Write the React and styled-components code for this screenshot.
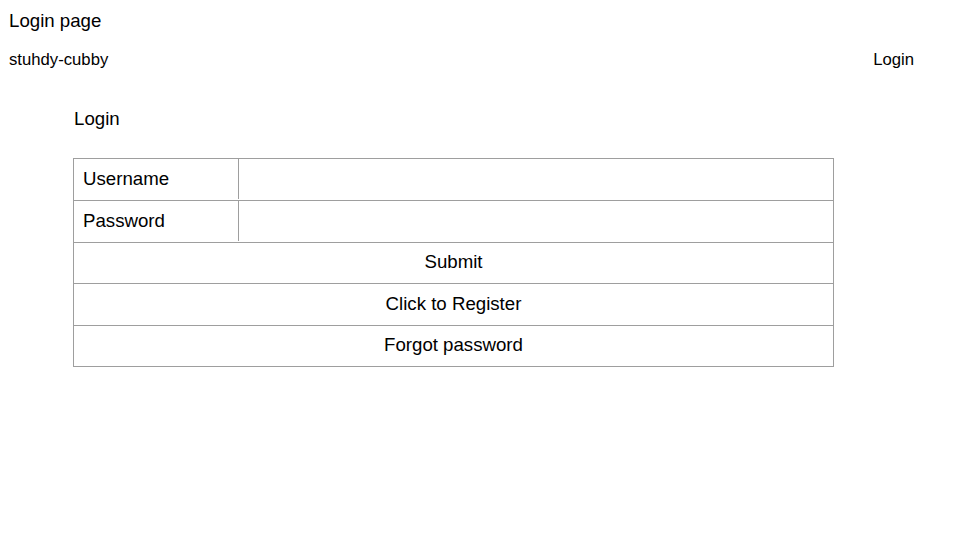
import React from 'react'
import styled, { createGlobalStyle } from 'styled-components'

const GlobalStyle = createGlobalStyle`
  html, body {
    margin: 0;
    padding: 0;
    background: #ffffff;
  }
  body {
    font-family: "Liberation Sans", Arial, sans-serif;
    color: #000000;
  }
`

const Page = styled.div`
  width: 960px;
  height: 540px;
  display: flex;
  flex-direction: column;
`

const PageTitle = styled.div`
  font-size: 18.67px;
  line-height: 22px;
  padding: 10px 0 0 9px;
`

const NavBar = styled.div`
  display: flex;
  justify-content: space-between;
  align-items: center;
  padding: 0 46px 0 9px;
  margin-top: 17px;
  height: 22px;
  font-size: 16.7px;
`

const Main = styled.div`
  margin-left: 73px;
  width: 761px;
`

const SectionTitle = styled.div`
  font-size: 18.67px;
  line-height: 22px;
  margin-top: 37px;
  padding-left: 1px;
`

const Form = styled.div`
  margin-top: 28px;
  border: 1px solid #9e9e9e;
  display: flex;
  flex-direction: column;
`

const Row = styled.div`
  display: flex;
  height: 41.4px;
  box-sizing: border-box;
  font-size: 18.67px;
  padding-bottom: 1px;
  & + & {
    border-top: 1px solid #9e9e9e;
  }
`

const LabelCell = styled.div`
  width: 165px;
  border-right: 1px solid #9e9e9e;
  display: flex;
  align-items: center;
  padding-left: 9px;
  box-sizing: border-box;
`

const InputCell = styled.div`
  flex: 1;
`

const ActionCell = styled.div`
  flex: 1;
  display: flex;
  align-items: center;
  justify-content: center;
`

export default function App() {
  return (
    <Page>
      <GlobalStyle />
      <PageTitle>Login page</PageTitle>
      <NavBar>
        <span>stuhdy-cubby</span>
        <span>Login</span>
      </NavBar>
      <Main>
        <SectionTitle>Login</SectionTitle>
        <Form>
          <Row>
            <LabelCell>Username</LabelCell>
            <InputCell />
          </Row>
          <Row>
            <LabelCell>Password</LabelCell>
            <InputCell />
          </Row>
          <Row>
            <ActionCell>Submit</ActionCell>
          </Row>
          <Row>
            <ActionCell>Click to Register</ActionCell>
          </Row>
          <Row>
            <ActionCell>Forgot password</ActionCell>
          </Row>
        </Form>
      </Main>
    </Page>
  )
}
